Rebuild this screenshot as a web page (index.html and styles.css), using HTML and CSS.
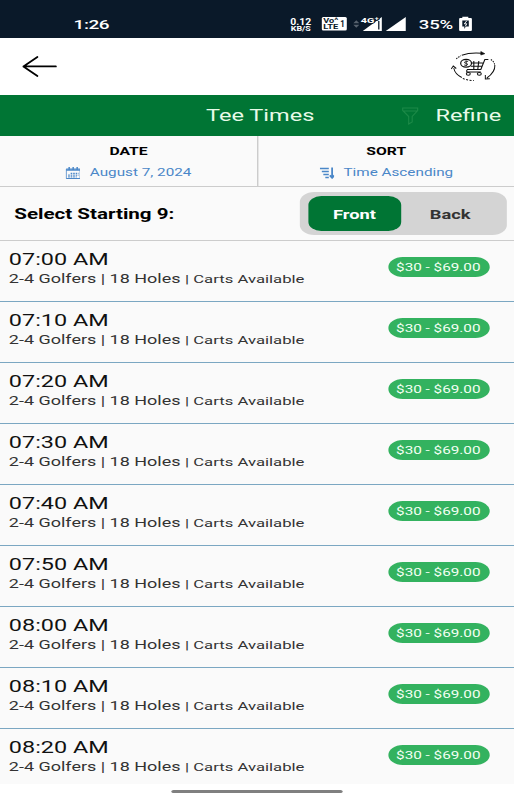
FILE: index.html
```
<!DOCTYPE html>
<html lang="en">
  <head>
    <meta charset="UTF-8" />
    <meta name="viewport" content="width=device-width, initial-scale=1.0" />
    <title>Tee Times</title>
    <link rel="stylesheet" href="styles.css">
  </head>
  <body>
    <div class="phone">
      <div class="status-bar">
        <span class="clock">1:26</span>
        <svg class="status-icons" viewBox="290 12 120 24" preserveAspectRatio="none">
          <g fill="#fff" font-family="Roboto, sans-serif" font-weight="700">
            <text x="290.5" y="24.6" font-size="8.5" textLength="21" lengthAdjust="spacingAndGlyphs">0.12</text>
            <text x="291" y="30.8" font-size="7" textLength="20" lengthAdjust="spacingAndGlyphs">KB/S</text>
            <rect x="322" y="17" width="25" height="13.5" rx="1.5" />
            <g fill="#0a1929">
              <text x="323.5" y="23.5" font-size="7" textLength="15" lengthAdjust="spacingAndGlyphs">Vo^</text>
              <text x="323.5" y="29.5" font-size="7.5" textLength="15" lengthAdjust="spacingAndGlyphs">LTE</text>
              <text x="340.5" y="27.5" font-size="9" textLength="4.5" lengthAdjust="spacingAndGlyphs">1</text>
            </g>
            <path d="M353.5 23.3l3-3 3 3zM353.5 24.7l3 3 3-3z" fill="#56616d" />
            <path d="M363 31l19-14v14z" />
            <path d="M379 21v8.5" stroke="#0a1929" stroke-width="1.3" />
            <text x="361" y="23.3" font-size="8" stroke="#0a1929" stroke-width="1.6" paint-order="stroke" textLength="18" lengthAdjust="spacingAndGlyphs">4G⁺</text>
            <path d="M386 31l20-14v14z" />
          </g>
        </svg>
        <span class="battery-level">35%</span>
        <svg class="battery" viewBox="459 16 14 16" preserveAspectRatio="none">
          <path d="M463 18v-1.3h6V18h2.6q1 0 1 1v11q0 1-1 1h-10.800q-1 0-1-1V19q0-1 1-1z" fill="#fff" />
          <path d="M463 20.500h6.500v6h-3l-1.500 2.500v-2.500h-2z" fill="#0a1929" />
          <path d="M467.500 20.800l-2.500 3h2.400l-1.400 2.500" fill="none" stroke="#fff" />
        </svg>
      </div>

      <div class="app-header">
        <svg class="back" viewBox="22 55 36 23" preserveAspectRatio="none" fill="none" stroke="#000" stroke-width="1.8" stroke-linecap="round" stroke-linejoin="round">
          <path d="M38 57L24 66.400 38 76M24 66.400h32.500" />
        </svg>
        <svg class="cart" viewBox="450 50 47 33" preserveAspectRatio="none" fill="none" stroke="#111">
          <path d="M456.500 59q2-2 4.500-3.200" stroke-dasharray="1.500 1" />
          <path d="M462 55.300q8-3 20-2" />
          <path d="M481 51.500l4 2.200-4 1.300z" fill="#111" stroke-width=".6" />
          <path d="M454 68q1 6 8 9.500" />
          <path d="M463 78.500q5 2 11 2" stroke-dasharray="2 1.500" />
          <path d="M451.500 69l2-3 3 2.500" />
          <path d="M495 65q.500 7-8 13M485.500 75v4l4.500-.3" />
          <path d="M491 59.500q3 2 3.800 5" stroke-dasharray="1.500 1" />
          <path d="M488.500 59.500h-3.500l-4 10h-14M470 63h13M471 66.200h11M467 70v2h14M474 61v8M479 61l-1 8" stroke-width="1.100" />
          <ellipse cx="466.300" cy="63.200" rx="5.400" ry="3.900" fill="#fff" stroke-width="1.200" />
          <path d="M468.300 61.500q-3-1-3.500.5t2 1.300q2 .8.500 1.800t-3-.2M466.400 60.500v5.500" stroke-width=".8" />
          <ellipse cx="468.500" cy="73.800" rx="2" ry="1.400" />
          <ellipse cx="479.500" cy="73.800" rx="2" ry="1.400" />
        </svg>
      </div>

      <div class="title-bar">
        <h1>Tee Times</h1>
        <div class="refine">
          <svg class="funnel" viewBox="402 106 18 18" preserveAspectRatio="none" fill="none" stroke="#1c8a48" stroke-width="1.100">
            <path d="M403.500 107h15v2.500l-5.500 6v5.500l-3.500 2v-7.500l-6-6zM404 110h14" />
          </svg>
          <span>Refine</span>
        </div>
      </div>

      <div class="filters">
        <div class="filter">
          <h2>DATE</h2>
          <div class="filter-value date-value">
            <svg class="calendar" viewBox="65 165 15 12" preserveAspectRatio="none" fill="none" stroke="#4a87c8">
              <path d="M65.500 167h14v9.500h-14z" />
              <path d="M65.500 168h14" stroke-width="1.600" />
              <path d="M68.500 165v3M72.500 165v3M76.500 165v3" stroke-width="1.500" />
              <path d="M70 171.300h8M67.500 173.100h10.500M67.500 174.900h8.500" stroke-dasharray="1.600 .9" stroke-width="1.300" />
            </svg>
            <span>August 7, 2024</span>
          </div>
        </div>
        <div class="filter">
          <h2>SORT</h2>
          <div class="filter-value sort-value">
            <svg class="sort" viewBox="319 165 15 12" preserveAspectRatio="none" fill="none" stroke="#4a87c8" stroke-width="1.500">
              <path d="M319 166.500h9M321 169.500h7M322.500 172.500h5.500M324.500 175.500h3.500" />
              <path d="M331.300 165.500v10M329 173.300l2.300 2.500 2.300-2.500" stroke-width="1.800" />
            </svg>
            <span>Time Ascending</span>
          </div>
        </div>
      </div>

      <div class="starting">
        <span class="starting-label">Select Starting 9:</span>
        <div class="toggle">
          <button class="active">Front</button>
          <button>Back</button>
        </div>
      </div>

      <div class="tee-list">
        <div class="tee">
          <div>
            <div class="tee-time">07:00 AM</div>
            <div class="tee-info">2-4 Golfers | 18 Holes <small>| Carts Available</small></div>
          </div>
          <span class="price">$30 - $69.00</span>
        </div>
        <div class="tee">
          <div>
            <div class="tee-time">07:10 AM</div>
            <div class="tee-info">2-4 Golfers | 18 Holes <small>| Carts Available</small></div>
          </div>
          <span class="price">$30 - $69.00</span>
        </div>
        <div class="tee">
          <div>
            <div class="tee-time">07:20 AM</div>
            <div class="tee-info">2-4 Golfers | 18 Holes <small>| Carts Available</small></div>
          </div>
          <span class="price">$30 - $69.00</span>
        </div>
        <div class="tee">
          <div>
            <div class="tee-time">07:30 AM</div>
            <div class="tee-info">2-4 Golfers | 18 Holes <small>| Carts Available</small></div>
          </div>
          <span class="price">$30 - $69.00</span>
        </div>
        <div class="tee">
          <div>
            <div class="tee-time">07:40 AM</div>
            <div class="tee-info">2-4 Golfers | 18 Holes <small>| Carts Available</small></div>
          </div>
          <span class="price">$30 - $69.00</span>
        </div>
        <div class="tee">
          <div>
            <div class="tee-time">07:50 AM</div>
            <div class="tee-info">2-4 Golfers | 18 Holes <small>| Carts Available</small></div>
          </div>
          <span class="price">$30 - $69.00</span>
        </div>
        <div class="tee">
          <div>
            <div class="tee-time">08:00 AM</div>
            <div class="tee-info">2-4 Golfers | 18 Holes <small>| Carts Available</small></div>
          </div>
          <span class="price">$30 - $69.00</span>
        </div>
        <div class="tee">
          <div>
            <div class="tee-time">08:10 AM</div>
            <div class="tee-info">2-4 Golfers | 18 Holes <small>| Carts Available</small></div>
          </div>
          <span class="price">$30 - $69.00</span>
        </div>
        <div class="tee">
          <div>
            <div class="tee-time">08:20 AM</div>
            <div class="tee-info">2-4 Golfers | 18 Holes <small>| Carts Available</small></div>
          </div>
          <span class="price">$30 - $69.00</span>
        </div>
      </div>

      <div class="nav-bar"><div class="handle"></div></div>
    </div>
  </body>
</html>
```
FILE: styles.css
```
* {
  box-sizing: border-box;
}

body {
  margin: 0;
  height: 800px;
  overflow: hidden;
  background: #fff;
  font-family: Roboto, sans-serif;
}

.phone {
  width: 360px;
  height: 800px;
  display: flex;
  flex-direction: column;
  transform: scaleX(1.42778);
  transform-origin: 0 0;
}

h1,
h2 {
  margin: 0;
}

svg {
  display: block;
  flex: none;
}

.status-bar {
  height: 38px;
  flex: none;
  display: flex;
  align-items: flex-start;
  padding: 12px 0 0 51.5px;
  background: #0a1929;
  color: #fff;
  line-height: 25px;
}

.clock {
  width: 151.6px;
  font-size: 13.3px;
  font-weight: 500;
  letter-spacing: -0.3px;
}

.status-icons {
  width: 84px;
  height: 24px;
}

.battery-level {
  width: 28px;
  margin-left: 6.2px;
  font-size: 13px;
  font-weight: 500;
  letter-spacing: -0.1px;
}

.battery {
  width: 9.8px;
  height: 16px;
  margin-top: 4px;
}

.app-header {
  height: 57px;
  flex: none;
  display: flex;
  align-items: center;
  justify-content: space-between;
  padding: 0 12px 0 15.4px;
  background: #fff;
}

.back {
  width: 25.2px;
  height: 23px;
}

.cart {
  width: 33px;
  height: 33px;
}

.title-bar {
  height: 41px;
  flex: none;
  display: flex;
  align-items: center;
  justify-content: space-between;
  padding: 0 9px 0 144.3px;
  background: #007534;
  color: #e8fbe9;
}

.title-bar h1,
.refine {
  font-size: 16.5px;
  font-weight: 400;
  line-height: 39px;
}

.refine {
  display: flex;
  align-items: center;
  gap: 11.5px;
}

.funnel {
  width: 12.6px;
  height: 18px;
}

.filters {
  height: 51px;
  flex: none;
  display: flex;
  background: #fafafa;
  border-bottom: 1px solid #ccc;
}

.filter {
  width: 50%;
  padding-top: 8px;
  text-align: center;
}

.filter + .filter {
  border-left: 1px solid #ccc;
}

.filter h2 {
  font-size: 11px;
  line-height: 16px;
}

.filter-value {
  display: flex;
  align-items: center;
  justify-content: center;
  gap: 6.5px;
  margin-top: 4px;
  color: #4a87c8;
  font-size: 10.7px;
  line-height: 17px;
}

.calendar,
.sort {
  width: 10.5px;
  height: 12px;
}

.starting {
  height: 54px;
  flex: none;
  display: flex;
  align-items: center;
  justify-content: space-between;
  padding: 0 5px 0 10px;
  background: #fafafa;
  border-bottom: 1px solid #ccc;
}

.starting-label {
  padding-top: 2px;
  font-size: 14.4px;
  font-weight: 700;
}

.toggle {
  width: 145px;
  height: 43px;
  padding: 4px 5.5px;
  display: flex;
  border-radius: 10px;
  background: #d4d4d4;
}

.toggle button {
  width: 68.5px;
  padding: 1px 0 0;
  border: none;
  border-radius: 9px;
  background: none;
  color: #333;
  font-family: inherit;
  font-size: 12.8px;
  font-weight: 700;
}

.toggle .active {
  width: 65.5px;
  background: #007534;
  color: #fff;
}

.tee-list {
  height: 543px;
  flex: none;
  overflow: hidden;
  background: #fafafa;
}

.tee {
  height: 61px;
  display: flex;
  justify-content: space-between;
  padding: 8px 17.5px 0 6.2px;
  border-bottom: 1px solid #7ba7c2;
}

.tee-time {
  padding-top: 1px;
  color: #111;
  font-size: 16.4px;
  line-height: 20px;
}

.tee-info {
  color: #333;
  font-size: 12.6px;
  line-height: 18px;
}

.tee-info small {
  font-size: 11.7px;
}

.price {
  width: 71px;
  height: 20px;
  margin-top: 8px;
  border-radius: 10px;
  background: #33b25f;
  color: #f2fff2;
  font-size: 10.7px;
  line-height: 21px;
  text-align: center;
}

.nav-bar {
  flex: 1;
  padding-top: 6px;
  background: #fff;
}

.handle {
  width: 120px;
  height: 3px;
  margin: 0 auto;
  border-radius: 2px;
  background: #808080;
}
```
